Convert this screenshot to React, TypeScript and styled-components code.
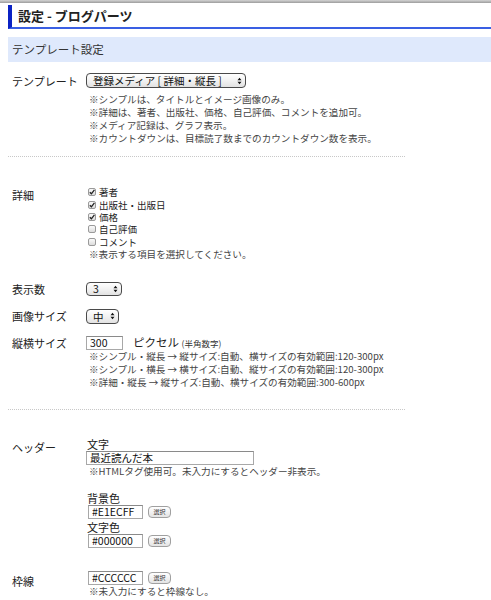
import styled, { createGlobalStyle } from "styled-components";

const GlobalStyle = createGlobalStyle`
  body {
    margin: 0;
    background: #fff;
    font-family: "Noto Sans CJK JP", "Noto Sans", sans-serif;
    color: #222;
  }
`;

const TopEdge = styled.div`
  height: 3px;
  background: linear-gradient(#d4d4d4, #9c9c9c);
`;

const Page = styled.div`
  padding-left: 8px;
`;

const Title = styled.h1`
  margin: 2px 0 0;
  height: 22px;
  line-height: 22px;
  padding-left: 6px;
  border-left: 4px solid #0b22c4;
  border-bottom: 2px solid #3a5fe3;
  font-size: 13px;
  font-weight: bold;
  color: #222;
`;

const SectionHead = styled.div`
  margin-top: 8px;
  height: 25px;
  line-height: 25px;
  padding-left: 4px;
  background: #dfe9fc;
  font-size: 11.5px;
  color: #333;
`;

const Row = styled.div<{ $top: number }>`
  display: grid;
  grid-template-columns: 78px 1fr;
  margin-top: ${(p) => p.$top}px;
`;

const Label = styled.div<{ $pad?: number }>`
  padding-left: 4px;
  padding-top: ${(p) => p.$pad ?? 0}px;
  font-size: 11px;
  line-height: 15px;
  color: #222;
`;

const Field = styled.div`
  display: flex;
  flex-direction: column;
  align-items: flex-start;
`;

const SelectBox = styled.div<{ $w: number; $h?: number }>`
  box-sizing: border-box;
  width: ${(p) => p.$w}px;
  height: ${(p) => p.$h ?? 15}px;
  border: 1px solid #4a4a4a;
  border-radius: 4px;
  background: linear-gradient(#ffffff, #f2f2f2 50%, #e2e2e2);
  display: flex;
  align-items: center;
  justify-content: space-between;
  padding: 0 3px 0 6px;
  font-size: 10.5px;
  line-height: 13px;
  color: #111;
  white-space: nowrap;
`;

const Arrows = () => (
  <svg width="5" height="8" viewBox="0 0 5 8">
    <path d="M0.5 3.2 L2.5 0.8 L4.5 3.2 Z M0.5 4.8 L2.5 7.2 L4.5 4.8 Z" fill="#111" />
  </svg>
);

const Notes = styled.div<{ $top?: number }>`
  margin-top: ${(p) => p.$top ?? 0}px;
  margin-left: 3px;
  font-size: 9.6px;
  line-height: 13px;
  color: #444;
  white-space: nowrap;
`;

const Divider = styled.div<{ $top: number }>`
  margin-top: ${(p) => p.$top}px;
  width: 397px;
  border-top: 1px dotted #c8c8c8;
`;

const CheckList = styled.div`
  display: flex;
  flex-direction: column;
  margin-left: 2px;
`;

const CheckRow = styled.div`
  display: flex;
  align-items: center;
  gap: 3px;
  height: 12.4px;
  font-size: 9.5px;
  line-height: 12px;
  color: #222;
`;

const Box = styled.span`
  box-sizing: border-box;
  width: 8px;
  height: 8px;
  border: 1px solid #9a9a9a;
  border-radius: 2px;
  background: linear-gradient(#fafafa, #dcdcdc);
  display: flex;
  align-items: center;
  justify-content: center;
`;

const Check = ({ on }: { on: boolean }) => (
  <Box>
    {on && (
      <svg width="6" height="6" viewBox="0 0 6 6">
        <path d="M0.8 3.2 L2.4 4.8 L5.4 0.8" stroke="#222" strokeWidth="1.3" fill="none" />
      </svg>
    )}
  </Box>
);

const InlineRow = styled.div`
  display: flex;
  align-items: center;
  gap: 10px;
  height: 14px;
`;

const TextInput = styled.div<{ $w: number }>`
  box-sizing: border-box;
  width: ${(p) => p.$w}px;
  height: 14px;
  border: 1px solid #a8a8a8;
  border-top-color: #8a8a8a;
  padding-left: 3px;
  font-size: 10.5px;
  line-height: 12px;
  color: #111;
  background: #fff;
`;

const Unit = styled.span`
  font-size: 11.5px;
  line-height: 14px;
  color: #222;
  span {
    font-size: 8.5px;
    color: #333;
  }
`;

const SubLabel = styled.div<{ $top?: number }>`
  margin-top: ${(p) => p.$top ?? 0}px;
  font-size: 11px;
  line-height: 14px;
  color: #222;
  margin-left: 1px;
`;

const ColorRow = styled.div`
  display: flex;
  align-items: center;
  gap: 5px;
  margin-left: 2px;
`;

const PickButton = styled.div`
  box-sizing: border-box;
  width: 23px;
  height: 12px;
  border: 1px solid #a0a0a0;
  border-radius: 4px;
  background: linear-gradient(#fff, #e4e4e4);
  font-size: 6px;
  line-height: 10px;
  text-align: center;
  color: #333;
`;

const ColorField = ({ value }: { value: string }) => (
  <ColorRow>
    <TextInput $w={55}>{value}</TextInput>
    <PickButton>選択</PickButton>
  </ColorRow>
);

export default function App() {
  return (
    <>
      <GlobalStyle />
      <TopEdge />
      <Page>
        <Title>設定 - ブログパーツ</Title>
        <SectionHead>テンプレート設定</SectionHead>

        <Row $top={11}>
          <Label $pad={1}>テンプレート</Label>
          <Field>
            <SelectBox $w={160}>
              <span>登録メディア [ 詳細・縦長 ]</span>
              <Arrows />
            </SelectBox>
            <Notes $top={5}>
              ※シンプルは、タイトルとイメージ画像のみ。
              <br />
              ※詳細は、著者、出版社、価格、自己評価、コメントを追加可。
              <br />
              ※メディア記録は、グラフ表示。
              <br />
              ※カウントダウンは、目標読了数までのカウントダウン数を表示。
            </Notes>
          </Field>
        </Row>
        <Divider $top={11} />

        <Row $top={29}>
          <Label $pad={2}>詳細</Label>
          <Field>
            <CheckList>
              <CheckRow><Check on />著者</CheckRow>
              <CheckRow><Check on />出版社・出版日</CheckRow>
              <CheckRow><Check on />価格</CheckRow>
              <CheckRow><Check on={false} />自己評価</CheckRow>
              <CheckRow><Check on={false} />コメント</CheckRow>
            </CheckList>
            <Notes>※表示する項目を選択してください。</Notes>
          </Field>
        </Row>

        <Row $top={21}>
          <Label>表示数</Label>
          <Field>
            <SelectBox $w={36} $h={14}>
              <span>3</span>
              <Arrows />
            </SelectBox>
          </Field>
        </Row>

        <Row $top={12}>
          <Label>画像サイズ</Label>
          <Field>
            <SelectBox $w={33} $h={15}>
              <span>中</span>
              <Arrows />
            </SelectBox>
          </Field>
        </Row>

        <Row $top={12}>
          <Label>縦横サイズ</Label>
          <Field>
            <InlineRow>
              <TextInput $w={37}>300</TextInput>
              <Unit>
                ピクセル <span>(半角数字)</span>
              </Unit>
            </InlineRow>
            <Notes>
              ※シンプル・縦長 → 縦サイズ:自動、横サイズの有効範囲:120-300px
              <br />
              ※シンプル・横長 → 横サイズ:自動、縦サイズの有効範囲:120-300px
              <br />
              ※詳細・縦長 → 縦サイズ:自動、横サイズの有効範囲:300-600px
            </Notes>
          </Field>
        </Row>
        <Divider $top={20} />

        <Row $top={27}>
          <Label $pad={3}>ヘッダー</Label>
          <Field>
            <SubLabel>文字</SubLabel>
            <TextInput $w={168}>最近読んだ本</TextInput>
            <Notes>※HTMLタグ使用可。未入力にするとヘッダー非表示。</Notes>
            <SubLabel $top={13}>背景色</SubLabel>
            <ColorField value="#E1ECFF" />
            <SubLabel $top={1}>文字色</SubLabel>
            <ColorField value="#000000" />
          </Field>
        </Row>

        <Row $top={23}>
          <Label $pad={3}>枠線</Label>
          <Field>
            <ColorField value="#CCCCCC" />
            <Notes>※未入力にすると枠線なし。</Notes>
          </Field>
        </Row>
      </Page>
    </>
  );
}
